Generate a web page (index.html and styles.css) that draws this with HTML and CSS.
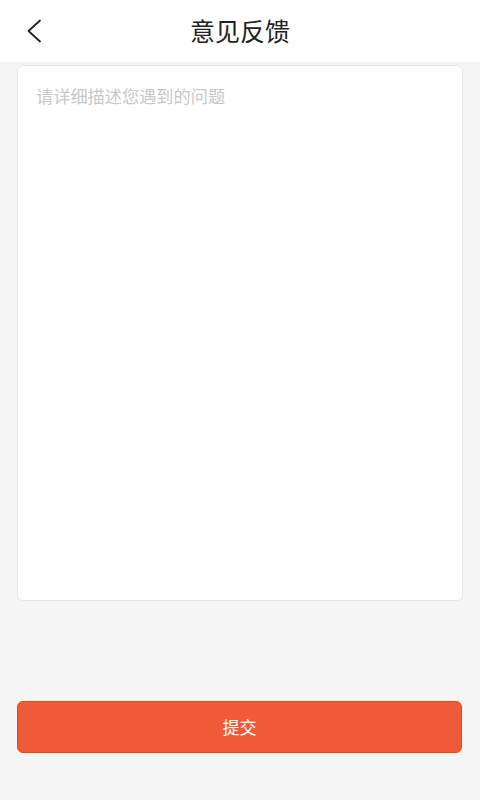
FILE: index.html
```html
<!DOCTYPE html>
<html lang="zh">
<head>
<meta charset="utf-8">
<title>意见反馈</title>
<link rel="stylesheet" href="styles.css">
</head>
<body>
<div class="page">
  <header class="header">
    <span class="back">
      <svg width="16" height="24" viewBox="0 0 16 24"><path d="M14 1.5 L2.5 12 L14 22.5" fill="none" stroke="#222" stroke-width="1.8" stroke-linecap="round" stroke-linejoin="round"/></svg>
    </span>
    <h1 class="title">意见反馈</h1>
  </header>
  <main class="content">
    <textarea class="input" placeholder="请详细描述您遇到的问题"></textarea>
    <button class="submit">提交</button>
  </main>
</div>
</body>
</html>
```
FILE: styles.css
```css
html, body {
  margin: 0;
  padding: 0;
  height: 100%;
  background: #f5f5f5;
  font-family: "Noto Sans CJK SC", "Noto Sans", sans-serif;
}
.page {
  display: flex;
  flex-direction: column;
  height: 800px;
}
.header {
  height: 62px;
  background: #fff;
  display: flex;
  align-items: center;
  justify-content: center;
  position: relative;
}
.back {
  position: absolute;
  left: 26px;
  top: 19px;
  width: 16px;
  height: 24px;
  display: flex;
}
.title {
  margin: 0 0 2px 0;
  font-size: 25px;
  font-weight: 400;
  color: #222;
  line-height: 1;
}
.content {
  padding: 3px 17px 0 17px;
  display: flex;
  flex-direction: column;
}
.input {
  box-sizing: border-box;
  width: 446px;
  height: 536px;
  border: 1px solid #e6e6e6;
  border-radius: 6px;
  background: #fff;
  padding: 18px 18px;
  font-family: "Noto Sans CJK SC", "Noto Sans", sans-serif;
  font-size: 17.2px;
  line-height: 24px;
  color: #333;
  resize: none;
  outline: none;
  margin: 0;
}
.input::placeholder {
  color: #c8c8c8;
}
.submit {
  margin-top: 100px;
  width: 445px;
  height: 52px;
  box-sizing: border-box;
  border: 1px solid #f0480c;
  border-radius: 6px;
  background: #f05a38;
  color: #fff;
  font-family: "Noto Sans CJK SC", "Noto Sans", sans-serif;
  font-size: 17px;
  padding: 0 0 2px 0;
}
```
